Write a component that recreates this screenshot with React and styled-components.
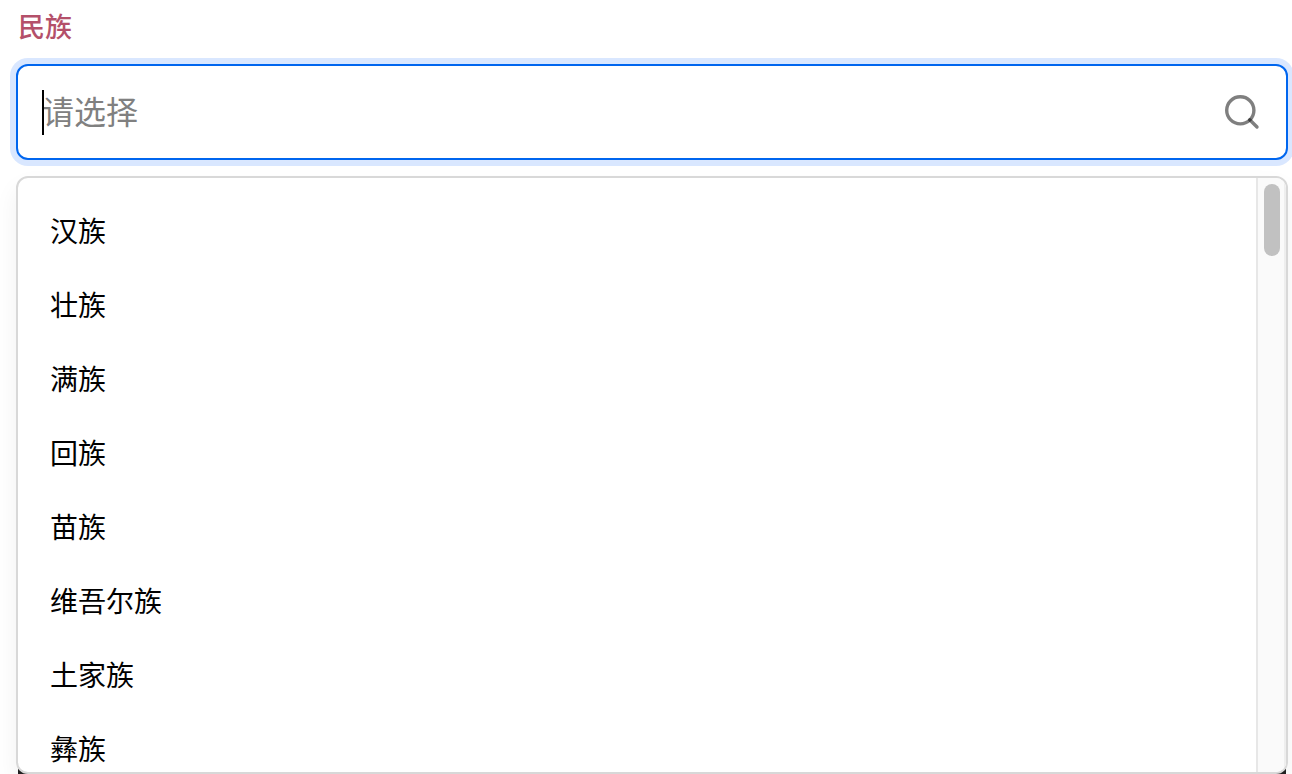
import React, { useState } from "react";
import styled, { createGlobalStyle } from "styled-components";

const GlobalStyle = createGlobalStyle`
  *, *::before, *::after { box-sizing: border-box; }
  body {
    margin: 0;
    background: #fff;
    color: #000;
    font-family: "Noto Sans CJK SC", sans-serif;
    -webkit-font-smoothing: antialiased;
  }
`;

const Page = styled.main`
  display: flex;
  flex-direction: column;
  height: 100vh;
  padding: 6px 4px 0 16px;
  overflow: hidden;
`;

const Label = styled.label`
  margin: 0 2px 18px;
  color: #b4506a;
  font-size: 27px;
  font-weight: 500;
  line-height: 40px;
`;

const SearchField = styled.div`
  position: relative;
  display: flex;
  flex: none;
  align-items: center;
  height: 96px;
  padding: 0 26px 0 24px;
  border: 2px solid #0066ef;
  border-radius: 12px;
  background: #fff;
  box-shadow: 0 0 0 6px #d9e7ff;
`;

const SearchInput = styled.input`
  flex: 1;
  min-width: 0;
  padding: 0 0 4px;
  border: 0;
  outline: 0;
  background: transparent;
  color: #000;
  font: 400 32px/48px "Noto Sans CJK SC", sans-serif;
  caret-color: ${({ $blank }) => ($blank ? "transparent" : "#000")};

  &::placeholder {
    color: #808080;
    opacity: 1;
  }
`;

const Caret = styled.span`
  position: absolute;
  top: 24px;
  left: 24px;
  width: 2px;
  height: 45px;
  background: #000;
`;

const SearchIcon = styled.svg`
  flex: none;
  width: 36px;
  height: 36px;
  fill: none;
  stroke: #000;
  stroke-opacity: 0.5;
  stroke-width: 3.4;
`;

const DropdownArea = styled.div`
  display: flex;
  flex: 1;
  min-height: 0;
  margin-top: 16px;
  background: linear-gradient(#222, #222) center bottom / calc(100% - 4px) 12px no-repeat;
`;

const Dropdown = styled.div`
  display: flex;
  flex: 1;
  min-width: 0;
  overflow: hidden;
  border: 2px solid #d8d8d8;
  border-radius: 12px;
  background: #fff;
  box-shadow: 0 12px 24px rgba(0, 0, 0, 0.06);
`;

const Options = styled.ul`
  flex: 1;
  margin: 0;
  padding: 15px 0;
  overflow-y: auto;
  list-style: none;
  scrollbar-width: none;
`;

const Option = styled.li`
  padding: 0 32px;
  font-size: 28px;
  line-height: 74px;
  cursor: pointer;
`;

const ScrollTrack = styled.div`
  flex: none;
  width: 30px;
  padding: 6px 4px 0 6px;
  border: solid #e7e7e7;
  border-width: 0 2px;
  border-right-color: #eeeeee;
  background: #fafafa;
`;

const ScrollThumb = styled.div`
  width: 16px;
  height: 72px;
  border-radius: 8px;
  background: #c1c1c1;
`;

const groups = ["汉族", "壮族", "满族", "回族", "苗族", "维吾尔族", "土家族", "彝族"];

export default function App() {
  const [value, setValue] = useState("");

  return (
    <>
      <GlobalStyle />
      <Page>
        <Label htmlFor="ethnicity">民族</Label>
        <SearchField>
          <SearchInput
            id="ethnicity"
            type="text"
            role="combobox"
            aria-expanded="true"
            aria-controls="ethnicity-options"
            autoComplete="off"
            placeholder="请选择"
            value={value}
            $blank={value === ""}
            onChange={(event) => setValue(event.target.value)}
          />
          {value === "" && <Caret />}
          <SearchIcon viewBox="0 0 36 36" aria-hidden="true">
            <circle cx="16.3" cy="16.3" r="13.6" />
            <path d="M25.7 25.7 33 33" strokeLinecap="round" />
          </SearchIcon>
        </SearchField>
        <DropdownArea>
          <Dropdown>
            <Options id="ethnicity-options" role="listbox">
              {groups.map((name) => (
                <Option key={name} role="option" aria-selected={value === name} onClick={() => setValue(name)}>
                  {name}
                </Option>
              ))}
            </Options>
            <ScrollTrack>
              <ScrollThumb />
            </ScrollTrack>
          </Dropdown>
        </DropdownArea>
      </Page>
    </>
  );
}
